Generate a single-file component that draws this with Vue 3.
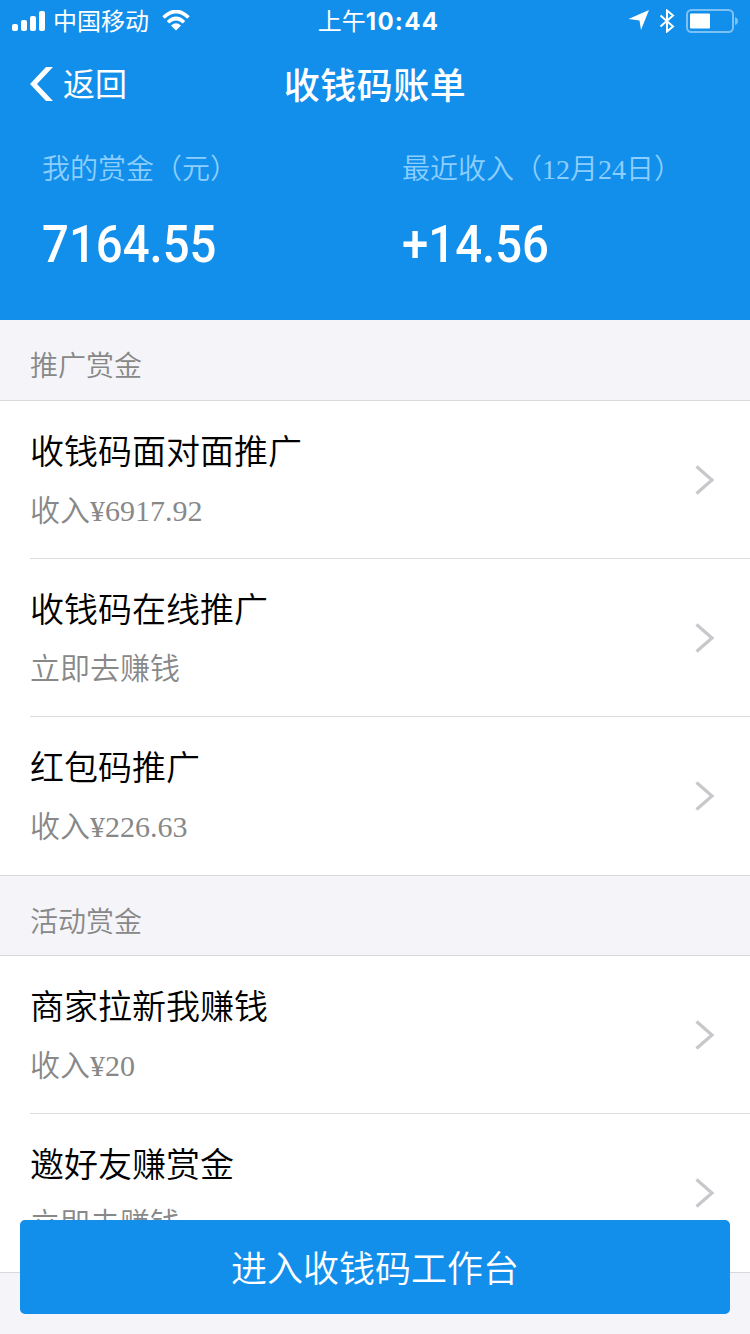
<script setup>
import { ref } from "vue";

const summary = ref([
  { label: "我的赏金（元）", amount: "7164.55" },
  { label: "最近收入（12月24日）", amount: "+14.56" },
]);

const groups = ref([
  {
    title: "推广赏金",
    items: [
      { name: "收钱码面对面推广", desc: "收入¥6917.92" },
      { name: "收钱码在线推广", desc: "立即去赚钱" },
      { name: "红包码推广", desc: "收入¥226.63" },
    ],
  },
  {
    title: "活动赏金",
    items: [
      { name: "商家拉新我赚钱", desc: "收入¥20" },
      { name: "邀好友赚赏金", desc: "立即去赚钱" },
    ],
  },
]);
</script>

<template>
  <div class="page">
    <header class="header">
      <div class="status-bar">
        <div class="status-left">
          <svg class="signal" width="34" height="20" viewBox="0 0 34 20">
            <rect x="0" y="13" width="6" height="7" rx="2" />
            <rect x="9" y="9" width="6" height="11" rx="2" />
            <rect x="18" y="5" width="6" height="15" rx="2" />
            <rect x="27" y="0" width="6" height="20" rx="2" />
          </svg>
          <span class="carrier">中国移动</span>
          <svg class="wifi" width="28" height="21" viewBox="0 0 28 21">
            <path d="M1.5 7.5 Q14 -4.5 26.500 7.500" />
            <path d="M6 12.300 Q14 4.700 22 12.300" />
            <path class="dot" d="M9 15.500 Q14 11 19 15.500 L14 20.500 Z" />
          </svg>
        </div>
        <div class="clock">上午<b>10:44</b></div>
        <div class="status-right">
          <svg class="location" width="22" height="21" viewBox="0 0 22 21">
            <path d="M21 0 L13 20 L11.500 10.500 L0.500 9 Z" />
          </svg>
          <svg class="bluetooth" width="16" height="24" viewBox="0 0 16 24">
            <path d="M1.500 6.500 L14 17.500 L8 22.500 V1.500 L14 6.500 L1.500 17.500" />
          </svg>
          <svg class="battery" width="54" height="24" viewBox="0 0 54 24">
            <rect class="shell" x="2" y="1" width="46" height="22" rx="4.500" />
            <rect class="level" x="5" y="4.500" width="20" height="15" rx="1" />
            <path class="cap" d="M50 8 Q53 9 53 12 Q53 15 50 16 Z" />
          </svg>
        </div>
      </div>

      <nav class="nav">
        <a class="back" href="#">
          <svg width="24" height="36" viewBox="0 0 24 36">
            <path d="M17 1 H24 L8 18 L24 35 H17 L1 18 Z" />
          </svg>
          <span>返回</span>
        </a>
        <h1>收钱码账单</h1>
      </nav>

      <div class="summary">
        <div v-for="s in summary" :key="s.label" class="summary-item">
          <div class="label">{{ s.label }}</div>
          <div class="amount">{{ s.amount }}</div>
        </div>
      </div>
    </header>

    <section v-for="g in groups" :key="g.title" class="group">
      <h2>{{ g.title }}</h2>
      <ul>
        <li v-for="item in g.items" :key="item.name">
          <div class="text">
            <div class="name">{{ item.name }}</div>
            <div class="desc">{{ item.desc }}</div>
          </div>
          <svg class="arrow" width="20" height="30" viewBox="0 0 20 30">
            <path d="M1.500 1.500 L17 15 L1.500 28.500" />
          </svg>
        </li>
      </ul>
    </section>

    <button class="enter">进入收钱码工作台</button>
  </div>
</template>

<style>
body {
  margin: 0;
}
</style>

<style scoped>
.page {
  position: relative;
  height: 1334px;
  overflow: hidden;
  background: #f4f4f9;
  font-family: "Liberation Serif", "Noto Sans CJK SC", sans-serif;
}

/* En-tête bleu */
.header {
  height: 320px;
  background: #128eeb;
  color: #fff;
}

.status-bar {
  display: grid;
  grid-template-columns: 1fr auto 1fr;
  align-items: center;
  height: 40px;
  padding: 1px 11px 0 12px;
  box-sizing: border-box;
  font-family: "Noto Sans CJK SC", sans-serif;
  font-size: 24px;
  line-height: 37px;
}

.status-left,
.status-right {
  display: flex;
  align-items: center;
}

.status-right {
  justify-content: flex-end;
}

.signal {
  fill: #fff;
}

.carrier {
  margin-left: 7px;
  padding-bottom: 2px;
}

.wifi {
  margin-left: 13px;
  fill: none;
  stroke: #fff;
  stroke-width: 3.6;
}

.wifi .dot {
  fill: #fff;
  stroke: none;
}

.clock {
  padding-left: 6px;
}

.clock b {
  font-family: Inter, sans-serif;
  font-weight: 700;
  letter-spacing: 1.3px;
}

.location {
  margin-right: 9px;
  fill: #fff;
}

.bluetooth {
  margin-right: 10px;
  fill: none;
  stroke: #fff;
  stroke-width: 2;
}

.battery .shell {
  fill: none;
  stroke: #7cc1f5;
  stroke-width: 2;
}

.battery .level {
  fill: #fff;
}

.battery .cap {
  fill: #7cc1f5;
}

.nav {
  display: grid;
  grid-template-columns: 1fr auto 1fr;
  align-items: center;
  height: 88px;
  padding: 0 29px;
  font-family: "Noto Sans CJK SC", sans-serif;
}

.back {
  display: flex;
  align-items: center;
  gap: 10px;
  color: #fff;
  font-size: 32px;
  line-height: 36px;
  text-decoration: none;
}

.back path {
  fill: #fff;
}

.back span {
  padding-bottom: 4px;
}

.nav h1 {
  margin: 0;
  padding-bottom: 3px;
  font-size: 36px;
  font-weight: 500;
  letter-spacing: 0.5px;
}

.summary {
  display: grid;
  grid-template-columns: 360px 1fr;
  padding: 22px 0 0 42px;
}

.label {
  height: 40px;
  color: #8cceff;
  font-size: 28px;
  font-weight: 350;
  line-height: 40px;
}

.amount {
  margin-top: 25px;
  font-family: Roboto, sans-serif;
  font-size: 52px;
  font-weight: 500;
  line-height: 60px;
  transform: scaleX(0.91);
  transform-origin: left;
}

/* Groupes de la liste */
.group h2 {
  height: 80px;
  margin: 0;
  padding: 7px 30px 0;
  box-sizing: border-box;
  color: #888;
  font-size: 28px;
  font-weight: 350;
  line-height: 80px;
}

.group + .group h2 {
  height: 79px;
}

.group ul {
  margin: 0;
  padding: 0 0 0 30px;
  list-style: none;
  background: #fff;
  border-top: 1px solid #d9d9dd;
  border-bottom: 1px solid #d9d9dd;
}

.group li {
  display: flex;
  align-items: center;
  justify-content: space-between;
  height: 158px;
  padding-right: 35px;
  box-sizing: border-box;
  border-bottom: 1px solid #dcdcdc;
}

.group li:last-child {
  border-bottom: none;
}

.text {
  padding-top: 2px;
}

.name {
  color: #000;
  font-size: 34px;
  font-weight: 350;
  line-height: 50px;
}

.desc {
  margin-top: 10px;
  color: #888;
  font-size: 30px;
  font-weight: 350;
  line-height: 46px;
}

.arrow path {
  fill: none;
  stroke: #c7c7cc;
  stroke-width: 3.2;
}

/* Bouton fixé au-dessus de la liste */
.enter {
  position: absolute;
  right: 20px;
  bottom: 20px;
  left: 20px;
  height: 94px;
  padding: 0 0 3px;
  border: none;
  border-radius: 5px;
  background: #128eeb;
  color: #fff;
  font-family: "Noto Sans CJK SC", sans-serif;
  font-size: 36px;
  font-weight: 350;
}
</style>
